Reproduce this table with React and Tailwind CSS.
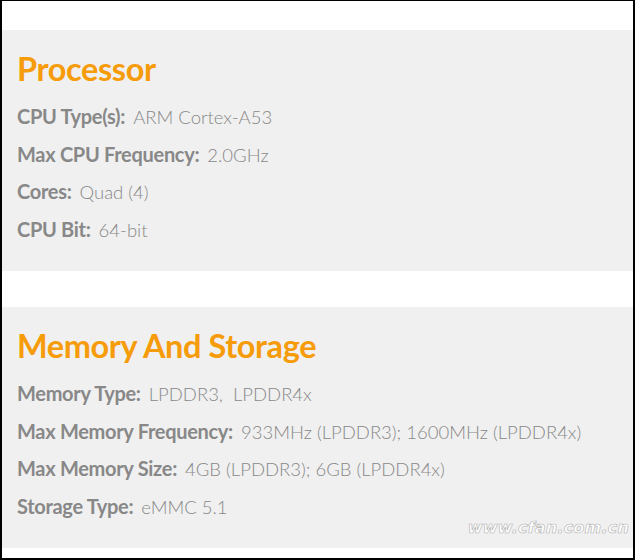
export default function App() {
  const sections = [
    {
      title: "Processor",
      rows: [
        ["CPU Type(s):", "ARM Cortex-A53"],
        ["Max CPU Frequency:", "2.0GHz"],
        ["Cores:", "Quad (4)"],
        ["CPU Bit:", "64-bit"],
      ],
    },
    {
      title: "Memory And Storage",
      rows: [
        ["Memory Type:", "LPDDR3,  LPDDR4x"],
        ["Max Memory Frequency:", "933MHz (LPDDR3); 1600MHz (LPDDR4x)"],
        ["Max Memory Size:", "4GB (LPDDR3); 6GB (LPDDR4x)"],
        ["Storage Type:", "eMMC 5.1"],
      ],
    },
  ];
  return (
    <div className="relative w-[635px] h-[560px] bg-white border-t border-l-2 border-r-2 border-b-2 border-black font-['Lato',sans-serif] overflow-hidden">
      <div className="pt-[29px] flex flex-col gap-[36px]">
        {sections.map((s) => (
          <div key={s.title} className="bg-[#f0f0f0] h-[241px] pl-[15px] pt-[22px]">
            <h2 className="text-[32.5px] leading-[34px] font-bold text-[#f69c0a] tracking-[-0.4px]">{s.title}</h2>
            <div className="mt-[17px] flex flex-col">
              {s.rows.map(([k, v]) => (
                <div key={k} className="h-[37.7px] leading-[26px] text-[#888] whitespace-pre">
                  <span className="text-[20px] font-bold tracking-[-0.3px]">{k}</span>
                  <span className="ml-[8px] text-[18.5px] font-light text-[#888]">{v}</span>
                </div>
              ))}
            </div>
          </div>
        ))}
      </div>
      <div className="absolute right-[4px] bottom-[18px] italic font-bold text-[16px] text-white tracking-[0.2px] [-webkit-text-stroke:0.6px_#b0b0b0] font-['DejaVu_Sans',sans-serif]">
        www.cfan.com.cn
      </div>
    </div>
  );
}
